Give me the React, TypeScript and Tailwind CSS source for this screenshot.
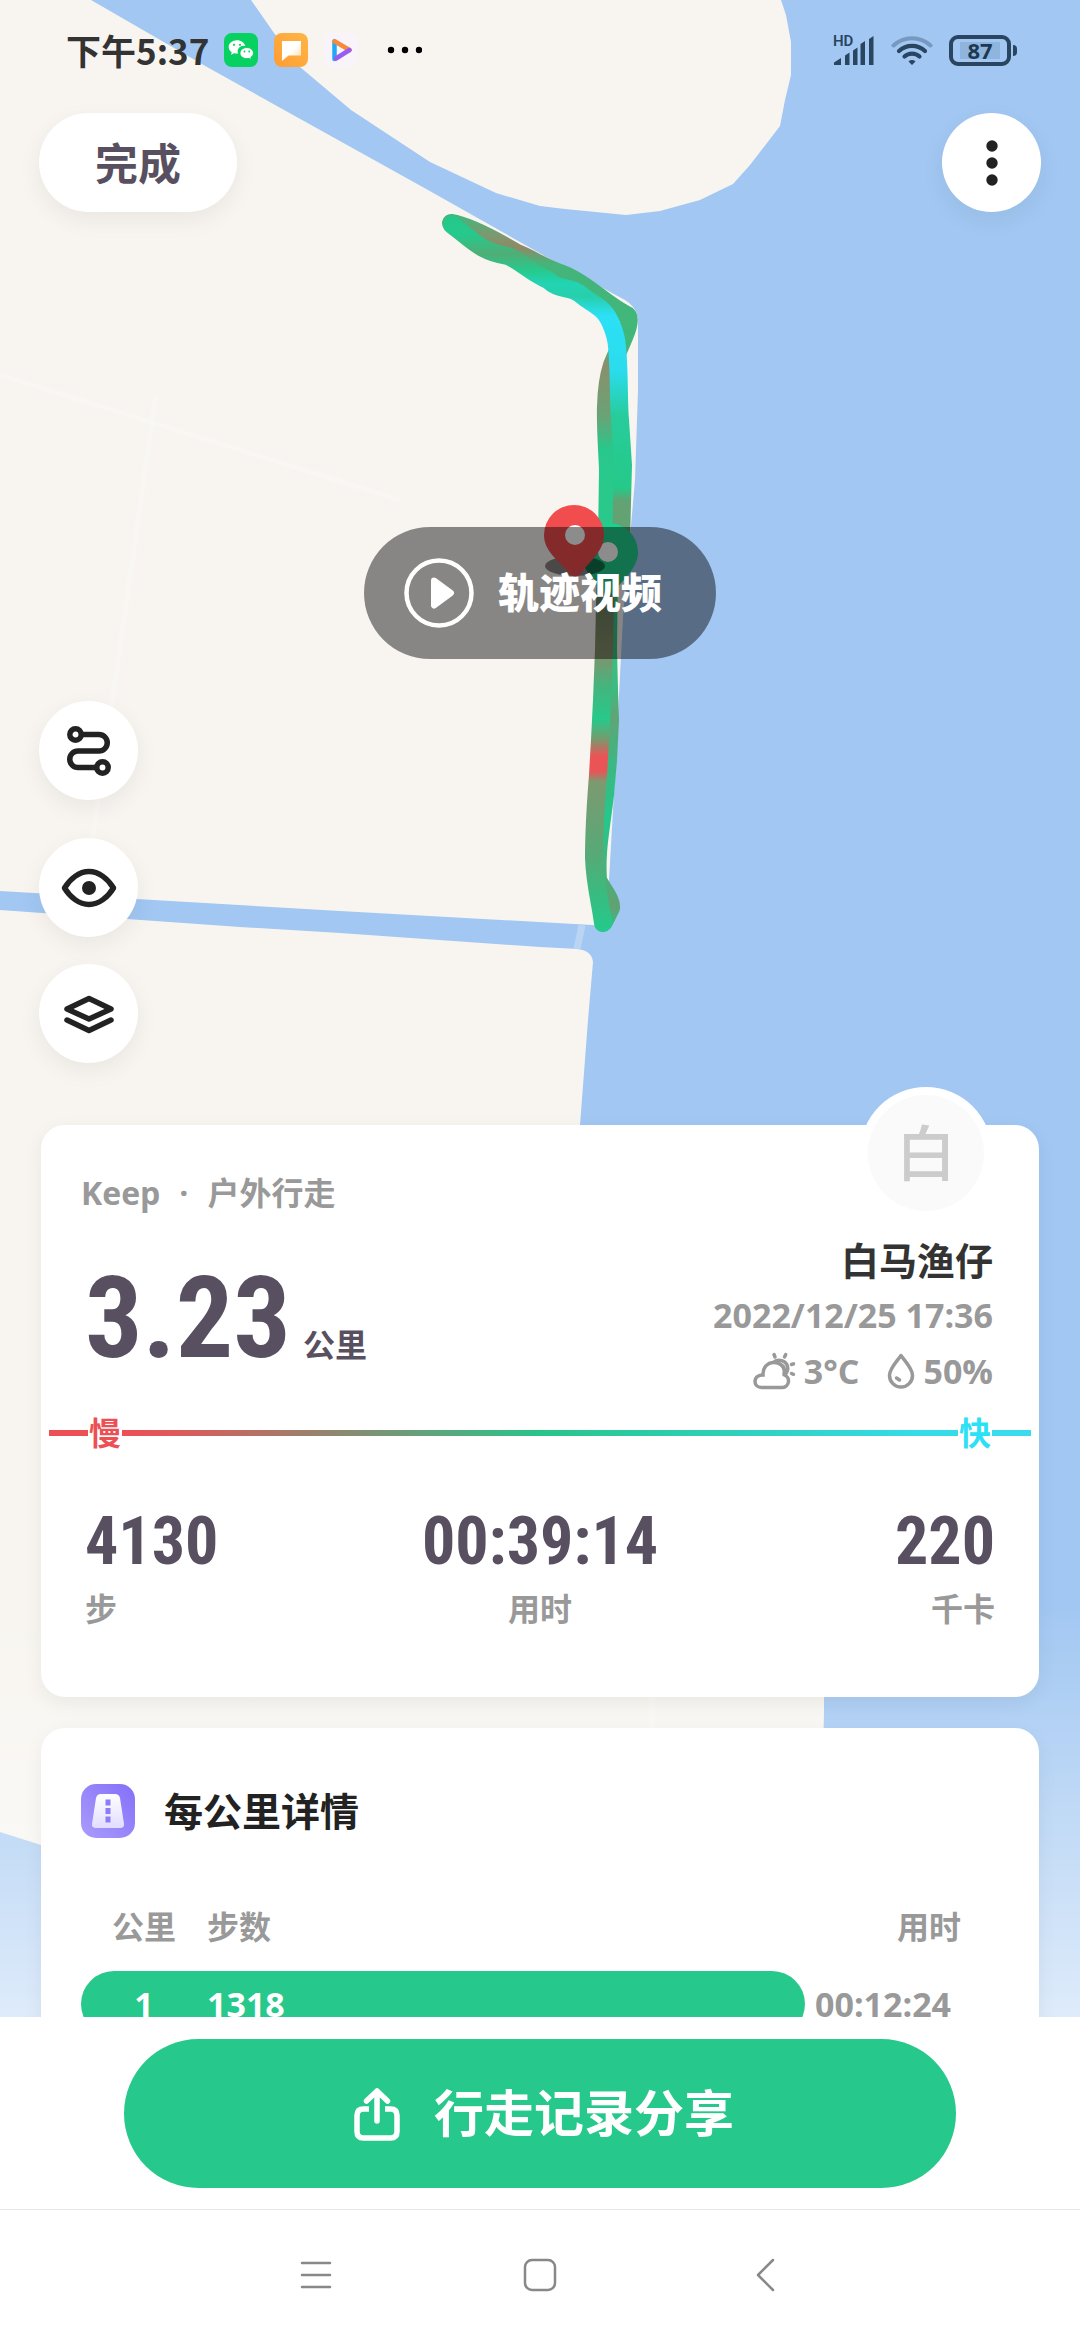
import { useState } from "react";

const cnFont = "font-['Open_Sans','Noto_Sans_CJK_SC',sans-serif]";
const numFont = "font-['Roboto_Condensed','Liberation_Sans_Narrow','Roboto',sans-serif]";
const roundButton =
  "flex h-[99px] w-[99px] items-center justify-center rounded-full bg-white text-[#222] shadow-[0_8px_24px_rgba(0,0,0,0.06)]";

type Split = { km: number; steps: number; time: string };

const splits: Split[] = [{ km: 1, steps: 1318, time: "00:12:24" }];

const stats = [
  { value: "4130", label: "步", align: "text-left" },
  { value: "00:39:14", label: "用时", align: "text-center" },
  { value: "220", label: "千卡", align: "text-right" },
];

function StatusBar() {
  return (
    <div className="flex h-[100px] items-center justify-between pl-[66px] pr-[63px]">
      <div className="flex items-center">
        <span className="w-[158px] whitespace-nowrap font-['Noto_Sans_CJK_SC',sans-serif] text-[35px] font-bold text-[#333]">下午5:37</span>
        <svg width="34" height="34" viewBox="0 0 34 34" aria-hidden="true">
          <rect width="34" height="34" rx="8" fill="#07d160" />
          <path d="M13 7.2c-4.8 0-8.300 3-8.300 6.700 0 2.100 1.200 4 3 5.200l-.6 2.600 3-1.500c.9.200 1.700.4 2.700.4l1.300-.1a5.600 5.600 0 0 1 7.200-7.400C20.500 9.700 17.200 7.200 13 7.200z" fill="#fff" />
          <path d="M29.500 20.100c0-3.100-3-5.600-6.700-5.600s-6.900 2.500-6.900 5.600 3.100 5.600 6.900 5.600c.8 0 1.600-.1 2.300-.3l2.300 1.300-.6-2.300c1.600-1 2.700-2.600 2.700-4.300z" fill="#fff" stroke="#07d160" />
          <g fill="#07d160">
            <circle cx="10" cy="11.800" r="1.100" />
            <circle cx="16" cy="11.800" r="1.100" />
            <circle cx="20.500" cy="18.500" r=".9" />
            <circle cx="25.200" cy="18.500" r=".9" />
          </g>
        </svg>
        <svg className="ml-4" width="34" height="34" viewBox="0 0 34 34" aria-hidden="true">
          <defs>
            <linearGradient id="noteBg" x1="0" y1="1" x2="1" y2="0">
              <stop offset="0" stopColor="#ff9d32" />
              <stop offset="1" stopColor="#ffb547" />
            </linearGradient>
            <linearGradient id="noteFold" x1="0" y1="0" x2="1" y2="1">
              <stop offset="0.500" stopColor="#fff" />
              <stop offset="1" stopColor="#ffd9a3" />
            </linearGradient>
          </defs>
          <rect width="34" height="34" rx="8" fill="url(#noteBg)" />
          <path d="M8 8h19v14.500H14.500L8 28z" fill="url(#noteFold)" />
        </svg>
        <svg className="ml-4" width="34" height="34" viewBox="0 0 34 34" fill="none" aria-hidden="true">
          <rect width="34" height="34" rx="8" fill="#f8f4fb" fillOpacity="0.800" />
          <path d="M10.500 26V8.500" stroke="#22a8f5" strokeWidth="4.500" strokeLinecap="round" />
          <path d="M10.500 8.200L25.500 17" stroke="#f58a3c" strokeWidth="4.500" strokeLinecap="round" />
          <path d="M25.500 17L12 25.500" stroke="#9a5cf0" strokeWidth="4.500" strokeLinecap="round" />
        </svg>
        <svg className="ml-7" width="36" height="8" viewBox="0 0 36 8" aria-hidden="true">
          <circle cx="5" cy="4" r="3.200" />
          <circle cx="19" cy="4" r="3.200" />
          <circle cx="33" cy="4" r="3.200" />
        </svg>
      </div>
      <div className="flex items-center text-[#2a4560]">
        <svg width="42" height="40" viewBox="0 0 42 40" fill="currentColor" aria-hidden="true">
          <text x="0" y="16" fontSize="15" fontWeight="600" fontFamily="Roboto, sans-serif">HD</text>
          <path d="M1 35v-2.500l7-4.500v7zM12 35V25.500l4.500-3V35zM20 35V20.500l4.500-3V35zM27.500 35V14l4.500-3v24zM36 35V9l4.500-3v29z" />
        </svg>
        <svg className="ml-4" width="42" height="32" viewBox="0 0 42 32" fill="none" stroke="currentColor" strokeLinecap="round" aria-hidden="true">
          <path d="M2.500 11.500a27 27 0 0 1 37 0" strokeWidth="4" opacity="0.350" />
          <path d="M8 17a19 19 0 0 1 26 0" strokeWidth="4.200" />
          <path d="M13.500 22.500a11 11 0 0 1 15 0" strokeWidth="4.200" />
          <path d="M17.500 27.500a5 5 0 0 1 7 0L21 31z" fill="currentColor" stroke="none" />
        </svg>
        <div className="ml-4 flex h-[31px] w-[62px] items-center justify-center rounded-[9px] border-4 border-current">
          <span className="flex h-[17px] w-[40px] items-center justify-center bg-[#8fb5dd] text-[22px] font-bold leading-none text-[#1d3852]">87</span>
        </div>
        <span className="ml-[2px] h-[11px] w-1 rounded-r bg-current" />
      </div>
    </div>
  );
}

function RouteMap() {
  return (
    <svg
      className="absolute inset-0 h-full w-full"
      viewBox="0 0 1080 2017"
      preserveAspectRatio="xMidYMin slice"
      fill="none"
      aria-hidden="true"
    >
      <defs>
        <linearGradient id="trackBack" gradientUnits="userSpaceOnUse" x1="0" y1="215" x2="0" y2="540">
          <stop offset="0" stopColor="#3fb87c" />
          <stop offset="0.060" stopColor="#7a9a70" />
          <stop offset="0.100" stopColor="#8f8967" />
          <stop offset="0.150" stopColor="#45b47a" />
          <stop offset="0.400" stopColor="#3fb87a" />
          <stop offset="0.460" stopColor="#8a8f6c" />
          <stop offset="0.620" stopColor="#6aa376" />
          <stop offset="0.720" stopColor="#28c78b" />
          <stop offset="1" stopColor="#2ac98b" />
        </linearGradient>
        <linearGradient id="trackFront" gradientUnits="userSpaceOnUse" x1="0" y1="215" x2="0" y2="540">
          <stop offset="0" stopColor="#22c98a" />
          <stop offset="0.060" stopColor="#25c98c" />
          <stop offset="0.120" stopColor="#4fae76" />
          <stop offset="0.170" stopColor="#27c98c" />
          <stop offset="0.210" stopColor="#22d4b4" />
          <stop offset="0.250" stopColor="#27cfaa" />
          <stop offset="0.310" stopColor="#2ce0f6" />
          <stop offset="0.480" stopColor="#2adcec" />
          <stop offset="0.620" stopColor="#27cc9b" />
          <stop offset="0.840" stopColor="#25c989" />
          <stop offset="0.880" stopColor="#62a273" />
          <stop offset="1" stopColor="#62a273" />
        </linearGradient>
        <linearGradient id="trackLow" gradientUnits="userSpaceOnUse" x1="0" y1="560" x2="0" y2="930">
          <stop offset="0" stopColor="#27c98b" />
          <stop offset="0.120" stopColor="#6d8260" />
          <stop offset="0.250" stopColor="#87906c" />
          <stop offset="0.340" stopColor="#45b47d" />
          <stop offset="0.430" stopColor="#27c98b" />
          <stop offset="0.480" stopColor="#6f9f70" />
          <stop offset="0.530" stopColor="#ea5457" />
          <stop offset="0.570" stopColor="#ea5457" />
          <stop offset="0.600" stopColor="#7c9a70" />
          <stop offset="0.800" stopColor="#56aa77" />
          <stop offset="0.900" stopColor="#39bb80" />
          <stop offset="1" stopColor="#25c98b" />
        </linearGradient>
        <linearGradient id="trackLowBack" gradientUnits="userSpaceOnUse" x1="0" y1="560" x2="0" y2="930">
          <stop offset="0" stopColor="#27c98b" />
          <stop offset="0.350" stopColor="#3dbb80" />
          <stop offset="0.420" stopColor="#5fa576" />
          <stop offset="0.550" stopColor="#3db781" />
          <stop offset="0.700" stopColor="#24c88b" />
          <stop offset="0.880" stopColor="#4fac76" />
          <stop offset="0.940" stopColor="#62a172" />
          <stop offset="1" stopColor="#25c98b" />
        </linearGradient>
        <linearGradient id="mapFade" x1="0" y1="0" x2="0" y2="1">
          <stop offset="0" stopColor="#fff" stopOpacity="0" />
          <stop offset="1" stopColor="#fff" stopOpacity="0.650" />
        </linearGradient>
      </defs>

      {/* water and land */}
      <rect width="1080" height="2017" fill="#a1c7f2" />
      <g fill="#f8f5f0">
        <path d="M0 0H91L207 67L428 190L573 272L625 300Q638 308 638 322L638 390L635 480L623 617L614 793L609 880L604 926L592 925L340 911L0 891Z" />
        <path d="M0 910L240 927L340 933L540 947L578 949Q592 951 593 962L588 1020L580 1125L824 1600V1710L823 1760L400 1900L41 1845L0 1832Z" />
        <path d="M251 0L274 33L300 67L351 110L430 162L496 193L540 206L565 209L626 215L660 211L700 200L733 184L750 165L780 126L785 100L791 75V42L786 15L781 0Z" />
      </g>
      <path d="M582 925L577 949" stroke="#b9d5f3" strokeWidth="7" />
      <g stroke="#fff" strokeOpacity="0.200" strokeWidth="5">
        <path d="M0 375L400 500" />
        <path d="M156 395L84 900" />
        <path d="M652 1690V1740" />
      </g>

      {/* walked track */}
      <g strokeWidth="18" strokeLinecap="round" strokeLinejoin="round">
        <path d="M451 223C470 226 500 243 517 253C530 258 545 268 560 273C585 282 605 304 625 314C636 318 620 345 612 365C602 395 607 440 608 470L607 540" stroke="url(#trackBack)" />
        <path d="M452 225C470 238 480 252 508 256C522 262 530 272 548 280C560 292 570 284 585 298C600 308 608 310 615 335C620 350 618 400 620 420L623 465L621 540" stroke="url(#trackFront)" />
        <path d="M609 560L608 650L609 690L610 720L608 760L605 795C601 830 596 850 598 880C604 892 612 900 611 908L604 922" stroke="url(#trackLowBack)" />
        <path d="M606 560L604 650L602 700L600 740L598 775C596 800 594 830 594 858C595 885 600 900 603 923" stroke="url(#trackLow)" />
      </g>

      {/* finish and start pins */}
      <path d="M609 523a29 29 0 0 1 29 29c0 15-12 25-29 45c-17-20-29-30-29-45a29 29 0 0 1 29-29z" fill="#1fd08c" />
      <circle cx="608" cy="552" r="10" fill="#fff" />
      <ellipse cx="575" cy="566" rx="30" ry="10" fill="#000" fillOpacity="0.450" />
      <path d="M574 505a30 30 0 0 1 30 30c0 16-14 26-24 39q-5 6-10 0c-12-14-26-23-26-39a30 30 0 0 1 30-30z" fill="#f14d4e" />
      <circle cx="575" cy="535" r="10" fill="#fff" />

      <rect y="1600" width="1080" height="417" fill="url(#mapFade)" />
    </svg>
  );
}

function SummaryCard() {
  return (
    <section className="relative mx-[41px] mt-[62px] rounded-[24px] bg-white pb-16 pt-12 shadow-[0_6px_20px_rgba(0,0,0,0.06)]">
      <div className="absolute -top-[38px] right-[47px] flex h-[132px] w-[132px] items-center justify-center rounded-full bg-white">
        <span className="flex h-[116px] w-[116px] items-center justify-center rounded-full bg-[#fafafa] text-[60px] font-medium leading-none text-[#ccc]">白</span>
      </div>
      <div className="flex justify-between pl-10 pr-[46px]">
        <div>
          <p className="flex gap-[19px] text-[32px] font-bold leading-[40px] text-[#999]">
            <span>Keep</span>
            <span>·</span>
            <span>户外行走</span>
          </p>
          <p className="mt-10 flex items-baseline gap-3 pl-1 text-[#584f60]">
            <span className={`${numFont} text-[114px] font-bold leading-[130px]`}>3.23</span>
            <span className="text-[32px] font-bold">公里</span>
          </p>
        </div>
        <div className="pt-[60px] text-right text-[34px] font-bold leading-[56px] text-[#999]">
          <h1 className="text-[38px] leading-[54px] text-[#333]">白马渔仔</h1>
          <p>2022/12/25 17:36</p>
          <p className="flex items-center justify-end">
            <svg width="44" height="38" viewBox="0 0 44 38" fill="none" stroke="currentColor" strokeWidth="3.500" strokeLinecap="round" aria-hidden="true">
              <path d="M9.500 35.500H30a6.500 6.500 0 0 0 2.500-12.500c.5-1.500.5-3 .3-4C31.500 13.500 27 10.500 22 10.500c-7 0-11.500 5.500-11 12.500-4.500 0-8 2-8 6.500 0 3.500 3 6 6.500 6z" />
              <path d="M22 10c4-3.500 12-1.500 13.500 4.500.7 3-.3 6-2.500 8M28 12c4 2 5 6 4 10" />
              <path d="M23 5l-1-2.500M32.500 5l1.200-2.500M39.500 12.500l2-.6M39.500 21.500l2 .8" />
            </svg>
            <span className="ml-2">3°C</span>
            <svg className="ml-7" width="28" height="36" viewBox="0 0 28 36" fill="none" stroke="currentColor" strokeWidth="3.500" strokeLinejoin="round" strokeLinecap="round" aria-hidden="true">
              <path d="M14 2.500C9 9.500 2.500 15.500 2.500 22.500a11.500 11.500 0 0 0 23 0C25.500 15.500 19 9.500 14 2.500z" />
              <path d="M9.500 25l3 2" />
            </svg>
            <span className="ml-2">50%</span>
          </p>
        </div>
      </div>
      {/* pace legend */}
      <div className="mx-2 mt-[14px] flex items-center gap-[1px] text-[32px] font-bold leading-[40px]">
        <span className="h-[6px] w-[39px] bg-[#ec5055]" />
        <span className="text-[#ec5055]">慢</span>
        <span className="h-[6px] flex-1 bg-[linear-gradient(90deg,#ec5055_0%,#e0585a_6%,#29c48a_50%,#35dbe8_95%)]" />
        <span className="text-[#2ce0f6]">快</span>
        <span className="h-[6px] w-[39px] bg-[#3bdbee]" />
      </div>
      <dl className="mt-[54px] grid grid-cols-3 px-11">
        {stats.map((s) => (
          <div key={s.label} className={`flex flex-col-reverse ${s.align}`}>
            <dt className="mt-2 text-[32px] font-bold leading-[48px] text-[#999]">{s.label}</dt>
            <dd className={`${numFont} text-[66px] font-bold leading-[70px] text-[#584f60]`}>{s.value}</dd>
          </div>
        ))}
      </dl>
    </section>
  );
}

function SplitsCard() {
  return (
    <section className="mx-[41px] mt-[31px] rounded-[24px] bg-white px-10 pb-10 pt-14 shadow-[0_6px_20px_rgba(0,0,0,0.06)]">
      <div className="flex items-center gap-[29px]">
        <svg width="54" height="54" viewBox="0 0 54 54" aria-hidden="true">
          <defs>
            <linearGradient id="roadBg" x1="1" y1="0" x2="0" y2="1">
              <stop offset="0" stopColor="#8370f8" />
              <stop offset="1" stopColor="#a99cfc" />
            </linearGradient>
            <linearGradient id="roadFg" x1="0" y1="0" x2="0" y2="1">
              <stop offset="0" stopColor="#fff" />
              <stop offset="1" stopColor="#e2dcff" />
            </linearGradient>
          </defs>
          <rect width="54" height="54" rx="15" fill="url(#roadBg)" />
          <path d="M20 10h14q4 0 5 4l4 26q.5 4-4 4H15q-4.500 0-4-4l4-26q1-4 5-4z" fill="url(#roadFg)" />
          <path d="M24.500 15.500h5v6h-5zM24.500 24h5v6h-5zM24.500 32.500h5v6h-5z" fill="#8d7cf8" />
        </svg>
        <h2 className="text-[39px] font-bold leading-[54px] text-[#222]">每公里详情</h2>
      </div>
      <table className="mt-[65px] w-full table-fixed border-separate border-spacing-0 text-left text-[32px] font-bold leading-[48px] text-[#999]">
        <thead>
          <tr>
            <th className="w-[126px] pb-5 text-center">公里</th>
            <th className="pb-5">步数</th>
            <th className="w-[194px] pb-5 pr-[38px] text-right">用时</th>
          </tr>
        </thead>
        <tbody>
          {splits.map((row) => (
            <tr key={row.km} className="h-[66px] text-[34px] leading-[26px]">
              <td className="rounded-l-full bg-[#27c88b] text-center text-white">{row.km}</td>
              <td className="rounded-r-full bg-[#27c88b] text-white">{row.steps}</td>
              <td className="pl-[10px]">{row.time}</td>
            </tr>
          ))}
        </tbody>
      </table>
    </section>
  );
}

export default function App() {
  const [showTrack, setShowTrack] = useState(true);

  return (
    <div className={`flex h-screen w-full flex-col bg-white ${cnFont}`}>
      <main className="relative min-h-0 flex-1 overflow-hidden">
        <RouteMap />
        <div className="relative">
          <StatusBar />
          <div className="mt-[13px] flex justify-between px-[39px]">
            <button type="button" className="h-[99px] w-[198px] rounded-full bg-white pt-1 text-[43px] font-bold text-[#584f60] shadow-[0_8px_24px_rgba(0,0,0,0.06)]">
              完成
            </button>
            <button type="button" aria-label="更多" className={roundButton}>
              <svg width="12" height="46" viewBox="0 0 12 46" fill="currentColor" aria-hidden="true">
                <circle cx="6" cy="6" r="5.700" />
                <circle cx="6" cy="23" r="5.700" />
                <circle cx="6" cy="40" r="5.700" />
              </svg>
            </button>
          </div>

          <button type="button" className="mx-auto mt-[315px] flex h-[132px] w-[352px] items-center rounded-full bg-black/45 pl-10 text-[41px] font-black text-white">
            <svg width="70" height="70" viewBox="0 0 70 70" fill="none" aria-hidden="true">
              <circle cx="35" cy="35" r="32.500" stroke="#fff" strokeWidth="4.500" />
              <path d="M30 22.500L47 35L30 47.500z" fill="#fff" stroke="#fff" strokeWidth="6" strokeLinejoin="round" />
            </svg>
            <span className="ml-6">轨迹视频</span>
          </button>

          <div className="mt-[42px] flex flex-col pl-[39px]">
            <button type="button" aria-label="轨迹" className={roundButton}>
              <svg width="46" height="52" viewBox="0 0 46 52" fill="none" stroke="currentColor" strokeWidth="5.500" aria-hidden="true">
                <circle cx="9.500" cy="9.500" r="5.700" />
                <circle cx="36.500" cy="42.500" r="5.700" />
                <path d="M15 9.500H33a8.200 8.200 0 0 1 0 16.500H12a8.200 8.200 0 0 0 0 16.500H31" />
              </svg>
            </button>
            <button type="button" aria-label="显示" aria-pressed={showTrack} onClick={() => setShowTrack(!showTrack)} className={`${roundButton} mt-[38px]`}>
              <svg width="56" height="42" viewBox="0 0 56 42" fill="none" stroke="currentColor" strokeWidth="5.500" strokeLinejoin="round" aria-hidden="true">
                <path d="M3.500 21C9 12 18 4.500 28 4.500S47 12 52.500 21C47 30 38 37.500 28 37.500S9 30 3.500 21z" />
                <circle cx="28" cy="21" r="7" fill="currentColor" stroke="none" />
              </svg>
            </button>
            <button type="button" aria-label="图层" className={`${roundButton} mt-[27px]`}>
              <svg width="52" height="40" viewBox="0 0 52 40" fill="none" stroke="currentColor" strokeWidth="5.500" strokeLinejoin="round" strokeLinecap="round" aria-hidden="true">
                <path d="M26 4.500L48 15L26 25L4 15z" />
                <path d="M4 26L26 36.500L48 26" />
              </svg>
            </button>
          </div>

          <SummaryCard />
          <SplitsCard />
        </div>
      </main>

      <div className="border-b border-[#e6e6e6] bg-white px-[124px] pb-[21px] pt-[22px]">
        <button type="button" className="flex h-[149px] w-full items-center justify-center gap-[34px] rounded-full bg-[#27c88b] pl-2 text-[50px] font-bold text-white">
          <svg width="46" height="54" viewBox="0 0 46 54" fill="none" stroke="currentColor" strokeWidth="5.500" strokeLinejoin="round" aria-hidden="true">
            <path d="M15 22H9.500Q3 22 3 28.500V44.500Q3 51 9.500 51H36.500Q43 51 43 44.500V28.500Q43 22 36.500 22H31" />
            <path d="M23 34V5M12.500 14L23 4L33.500 14" strokeLinecap="round" />
          </svg>
          行走记录分享
        </button>
      </div>

      <nav className="flex h-[130px] items-center justify-center bg-white text-[#888]">
        <button type="button" aria-label="最近任务" className="flex w-[227px] justify-center">
          <svg width="32" height="32" viewBox="0 0 32 32" stroke="currentColor" strokeWidth="2.500" strokeLinecap="round" aria-hidden="true">
            <path d="M2 4H30M2 16H30M2 28H30" />
          </svg>
        </button>
        <button type="button" aria-label="主屏幕" className="flex w-[222px] justify-center">
          <svg width="34" height="34" viewBox="0 0 34 34" fill="none" stroke="currentColor" strokeWidth="2.500" aria-hidden="true">
            <rect x="2" y="2" width="30" height="30" rx="7" />
          </svg>
        </button>
        <button type="button" aria-label="返回" className="flex w-[227px] justify-center">
          <svg width="20" height="34" viewBox="0 0 20 34" fill="none" stroke="currentColor" strokeWidth="2.500" strokeLinecap="round" strokeLinejoin="round" aria-hidden="true">
            <path d="M18 2L3 17L18 32" />
          </svg>
        </button>
      </nav>
    </div>
  );
}
